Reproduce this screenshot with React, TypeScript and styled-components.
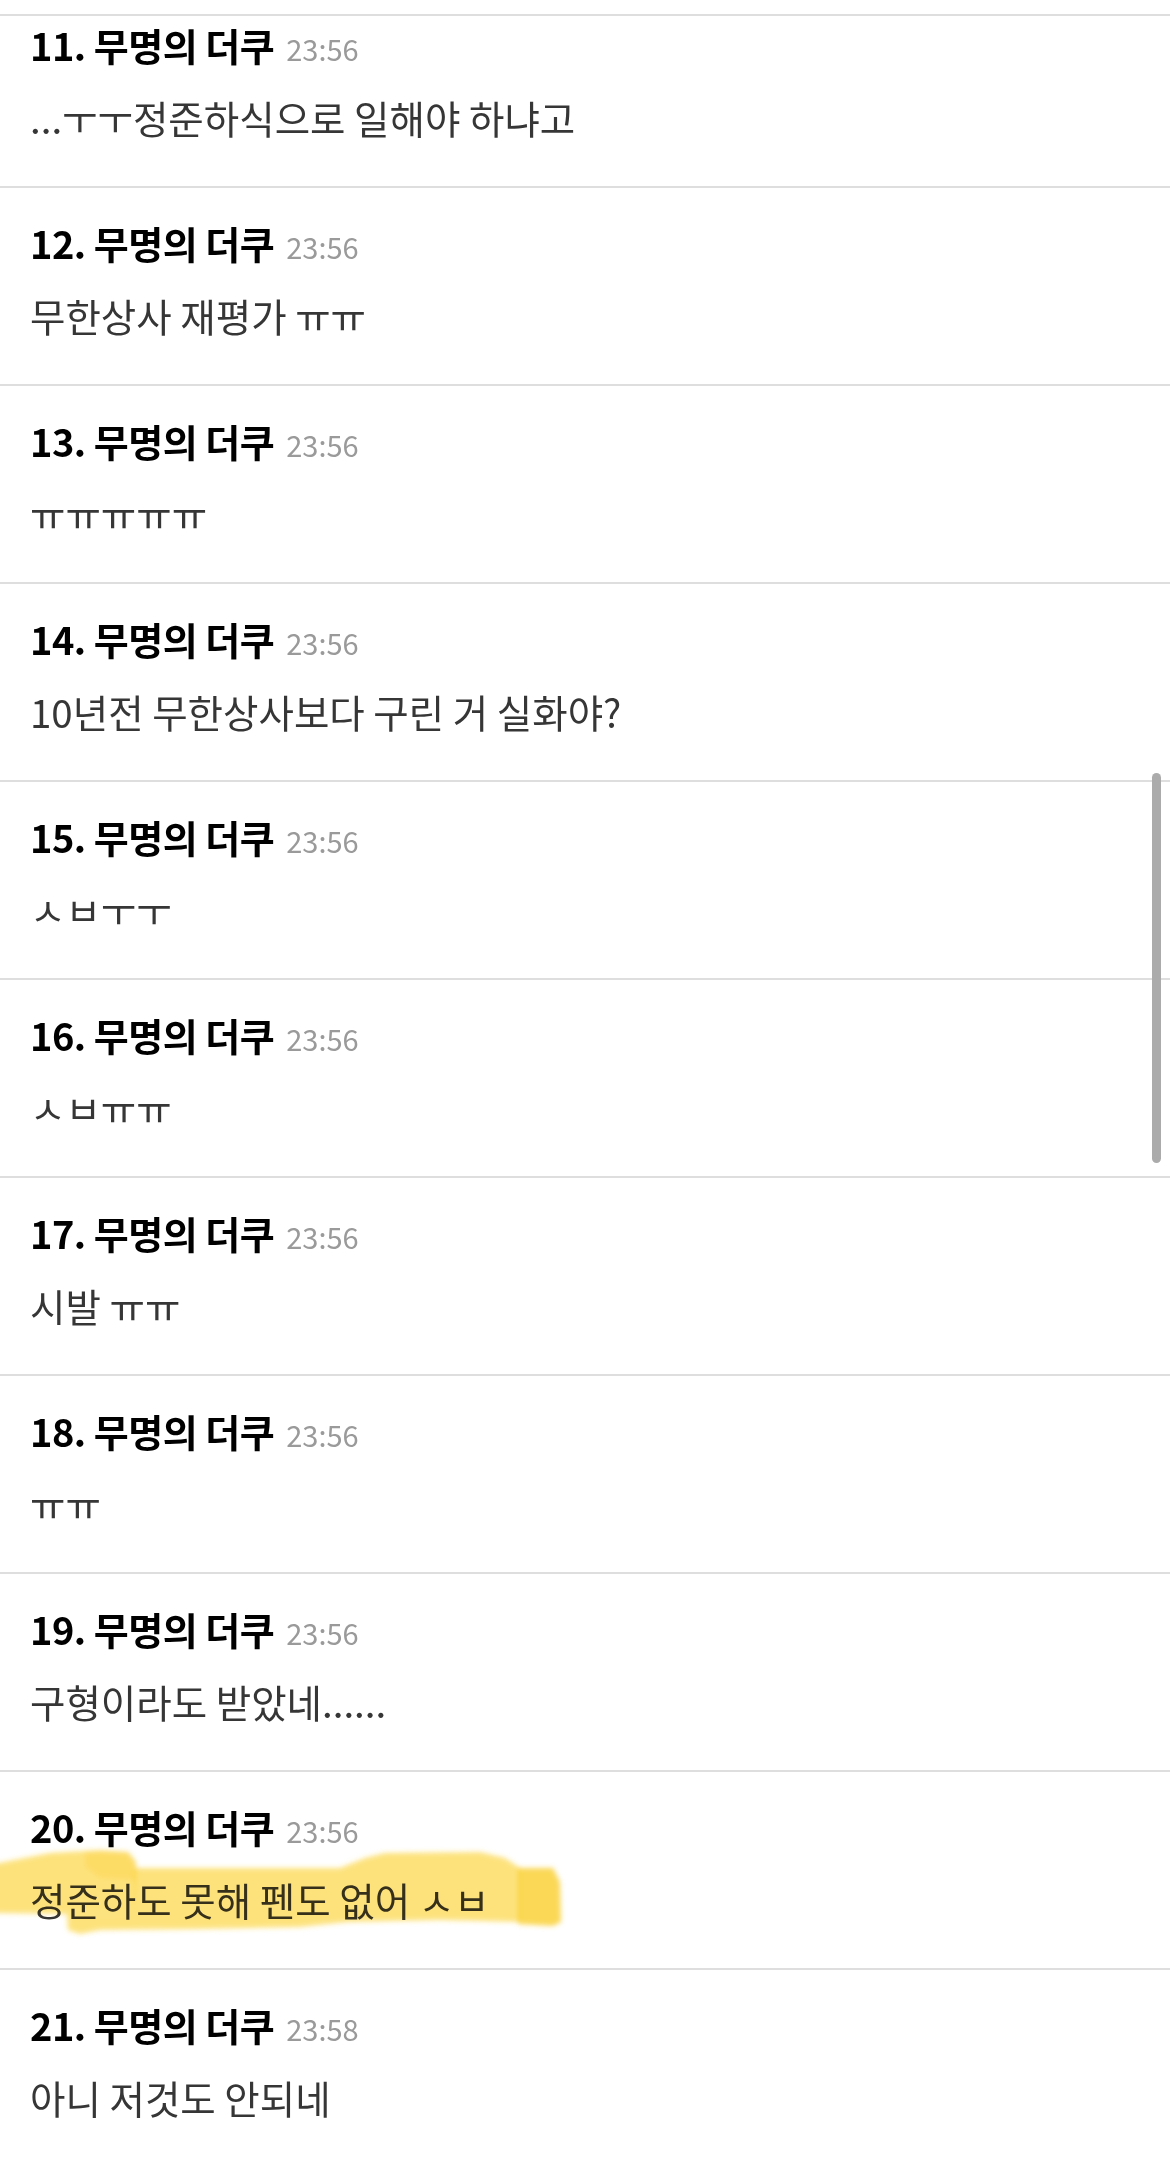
import React from "react";
import styled, { createGlobalStyle } from "styled-components";

const GlobalStyle = createGlobalStyle`
  html, body {
    margin: 0;
    padding: 0;
    background: #ffffff;
    overflow: hidden;
  }
  body {
    font-family: "Noto Sans CJK KR", "Noto Sans", sans-serif;
    -webkit-font-smoothing: antialiased;
  }
`;

const Page = styled.div`
  position: relative;
  width: 1170px;
  height: 2157px;
  overflow: hidden;
  padding-top: 14px;
  box-sizing: border-box;
`;

const CommentList = styled.ol`
  list-style: none;
  margin: 0;
  padding: 0;
`;

const CommentItem = styled.li<{ $clipped?: boolean }>`
  position: relative;
  display: flex;
  flex-direction: column;
  gap: 22px;
  border-top: 2px solid #dedede;
  padding: ${(p) => (p.$clipped ? "4px" : "30px")} 28px 44px 30px;
`;

const CommentHeader = styled.div`
  display: flex;
  align-items: baseline;
  gap: 12px;
  height: 50px;
  line-height: 50px;
`;

const Author = styled.span`
  font-size: 38px;
  font-weight: 700;
  color: #000000;
  letter-spacing: -0.5px;
`;

const Time = styled.span`
  font-size: 29px;
  font-weight: 400;
  color: #9a9a9a;
`;

const Body = styled.p`
  position: relative;
  z-index: 0;
  margin: 0;
  font-size: 38.5px;
  line-height: 50px;
  color: #363636;
  white-space: pre;
`;

const Highlight = styled.svg`
  position: absolute;
  left: 0;
  top: 0;
  width: 600px;
  height: 198px;
  pointer-events: none;
  mix-blend-mode: multiply;
  z-index: 1;
`;

const ScrollThumb = styled.div`
  position: absolute;
  right: 9px;
  top: 773px;
  width: 9px;
  height: 390px;
  border-radius: 5px;
  background: #ababab;
`;

type Comment = {
  no: number;
  time: string;
  text: string;
  highlighted?: boolean;
};

const comments: Comment[] = [
  { no: 11, time: "23:56", text: "...ㅜㅜ정준하식으로 일해야 하냐고" },
  { no: 12, time: "23:56", text: "무한상사 재평가 ㅠㅠ" },
  { no: 13, time: "23:56", text: "ㅠㅠㅠㅠㅠ" },
  { no: 14, time: "23:56", text: "10년전 무한상사보다 구린 거 실화야?" },
  { no: 15, time: "23:56", text: "ㅅㅂㅜㅜ" },
  { no: 16, time: "23:56", text: "ㅅㅂㅠㅠ" },
  { no: 17, time: "23:56", text: "시발 ㅠㅠ" },
  { no: 18, time: "23:56", text: "ㅠㅠ" },
  { no: 19, time: "23:56", text: "구형이라도 받았네......" },
  { no: 20, time: "23:56", text: "정준하도 못해 펜도 없어 ㅅㅂ", highlighted: true },
  { no: 21, time: "23:58", text: "아니 저것도 안되네" },
];

const MarkerStroke: React.FC = () => (
  <Highlight viewBox="0 0 600 198" aria-hidden="true">
    <defs>
      <filter id="soft" x="-10%" y="-20%" width="120%" height="140%">
        <feGaussianBlur stdDeviation="2.4" />
      </filter>
    </defs>
    <g filter="url(#soft)">
      <g fill="rgb(252, 208, 45)" fillOpacity="0.62">
        <polygon points="-6,92 50,81 100,78 128,80 136,90 136,110 134,141 67,142 -6,141" />
        <polygon points="134,96 340,96 365,86 385,81 480,80 505,86 520,96 520,150 440,148 347,150 300,155 200,157 100,158 80,162 68,158 67,142 134,141" />
      </g>
      <polygon
        points="518,96 553,96 560,110 561,150 553,154 518,152"
        fill="rgb(250, 205, 40)"
        fillOpacity="0.78"
      />
      <polygon
        points="85,80 128,80 136,90 136,108 100,106 85,95"
        fill="rgb(250, 205, 40)"
        fillOpacity="0.25"
      />
    </g>
  </Highlight>
);

export default function App() {
  return (
    <>
      <GlobalStyle />
      <Page>
        <CommentList>
          {comments.map((c, i) => (
            <CommentItem key={c.no} $clipped={i === 0}>
              <CommentHeader>
                <Author>{c.no}. 무명의 더쿠</Author>
                <Time>{c.time}</Time>
              </CommentHeader>
              <Body>{c.text}</Body>
              {c.highlighted && <MarkerStroke />}
            </CommentItem>
          ))}
        </CommentList>
        <ScrollThumb />
      </Page>
    </>
  );
}
